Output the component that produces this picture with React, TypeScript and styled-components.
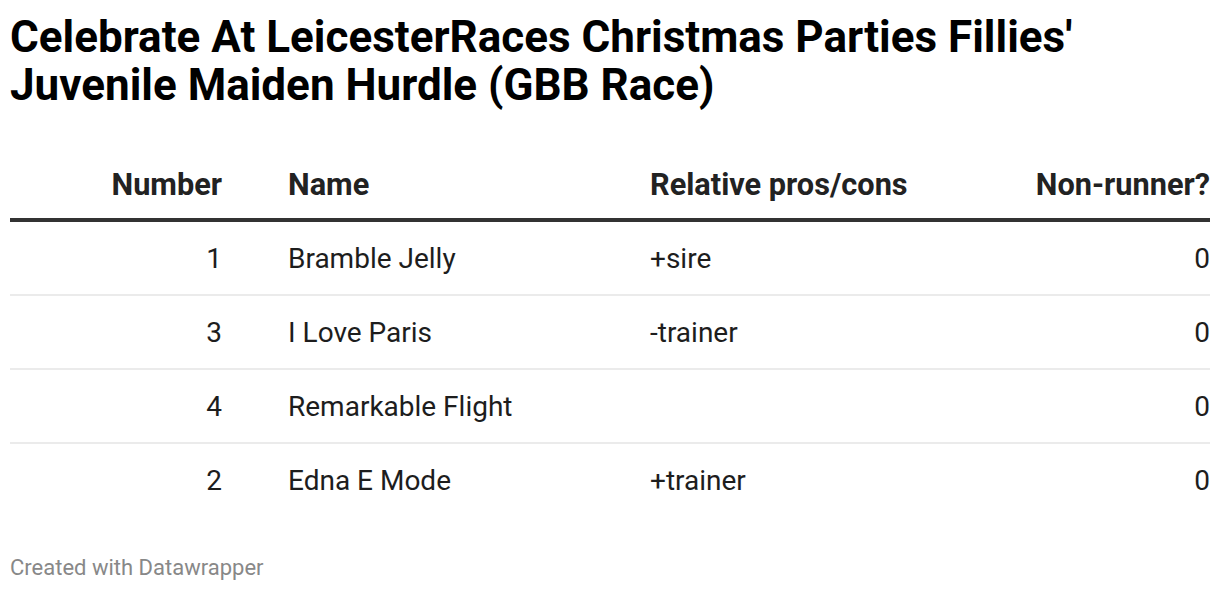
import styled, { createGlobalStyle } from "styled-components";

const GlobalStyle = createGlobalStyle`
  html, body {
    margin: 0;
    padding: 0;
    background: #ffffff;
  }
  body {
    font-family: Roboto, "Liberation Sans", Arial, sans-serif;
    color: #1d1d1d;
  }
`;

type Runner = {
  number: number;
  name: string;
  note: string;
  nonRunner: number;
};

const runners: Runner[] = [
  { number: 1, name: "Bramble Jelly", note: "+sire", nonRunner: 0 },
  { number: 3, name: "I Love Paris", note: "-trainer", nonRunner: 0 },
  { number: 4, name: "Remarkable Flight", note: "", nonRunner: 0 },
  { number: 2, name: "Edna E Mode", note: "+trainer", nonRunner: 0 },
];

const App = () => {
  return (
    <>
      <GlobalStyle />
      <Page>
        <Title>
          Celebrate At LeicesterRaces Christmas Parties Fillies'
          <br />
          Juvenile Maiden Hurdle (GBB Race)
        </Title>
        <Table>
          <HeadRow>
            <HeadCell $align="right">Number</HeadCell>
            <HeadCell>Name</HeadCell>
            <HeadCell>Relative pros/cons</HeadCell>
            <HeadCell $align="right">Non-runner?</HeadCell>
          </HeadRow>
          {runners.map((r, i) => (
            <Row key={r.number} $last={i === runners.length - 1}>
              <Cell $align="right">{r.number}</Cell>
              <Cell>{r.name}</Cell>
              <Cell>{r.note}</Cell>
              <Cell $align="right">{r.nonRunner}</Cell>
            </Row>
          ))}
        </Table>
        <Footer>Created with Datawrapper</Footer>
      </Page>
    </>
  );
};

export default App;

const Page = styled.div`
  width: 1200px;
  padding: 13px 10px 0 10px;
`;

const Title = styled.h1`
  margin: 0;
  font-size: 44px;
  line-height: 48px;
  font-weight: 700;
  color: #000000;
  letter-spacing: 0;
`;

const Table = styled.div`
  margin-top: 60px;
  display: flex;
  flex-direction: column;
`;

const columns = "212px 296px 1fr 200px";

const HeadRow = styled.div`
  display: grid;
  grid-template-columns: ${columns};
  column-gap: 66px;
  align-items: end;
  padding-bottom: 17px;
  border-bottom: 4px solid #333333;
`;

const HeadCell = styled.div<{ $align?: "left" | "right" }>`
  font-size: 30.7px;
  line-height: 32px;
  font-weight: 700;
  color: #222222;
  text-align: ${(p) => p.$align || "left"};
`;

const Row = styled.div<{ $last?: boolean }>`
  display: grid;
  grid-template-columns: ${columns};
  column-gap: 66px;
  align-items: center;
  height: 74px;
  padding-top: 1px;
  box-sizing: border-box;
  border-bottom: 2px solid ${(p) => (p.$last ? "transparent" : "#ebebeb")};
`;

const Cell = styled.div<{ $align?: "left" | "right" }>`
  font-size: 28px;
  line-height: 32px;
  color: #1d1d1d;
  text-align: ${(p) => p.$align || "left"};
`;

const Footer = styled.div`
  margin-top: 38px;
  font-size: 22px;
  line-height: 24px;
  color: #888888;
`;
